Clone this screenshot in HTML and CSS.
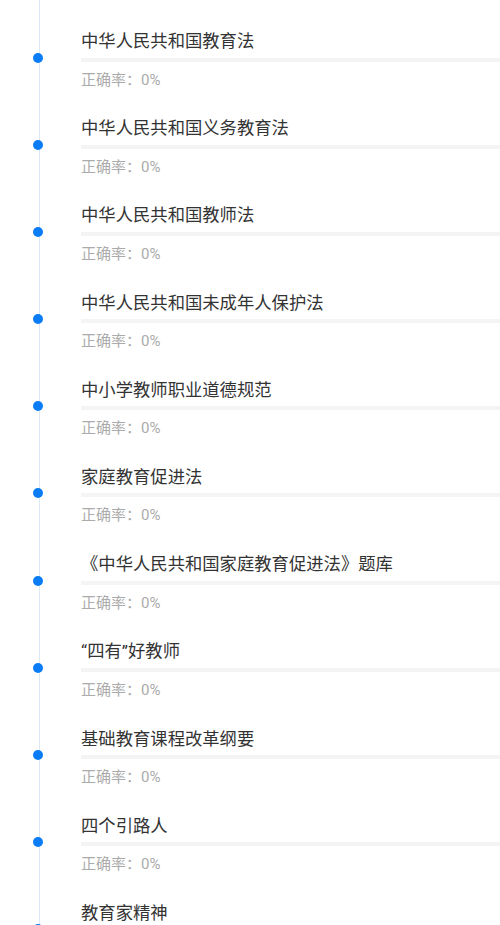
FILE: index.html
```html
<!DOCTYPE html>
<html>
<head>
    <title>题库列表</title>
    <link rel="stylesheet" href="styles.css">
</head>
<body>
    <div class="timeline">
        <div class="item">
            <div class="rail"><span class="dot"></span></div>
            <div class="body">
                <div class="title">中华人民共和国教育法</div>
                <div class="bar"></div>
                <div class="rate">正确率：0%</div>
            </div>
        </div>
        <div class="item">
            <div class="rail"><span class="dot"></span></div>
            <div class="body">
                <div class="title">中华人民共和国义务教育法</div>
                <div class="bar"></div>
                <div class="rate">正确率：0%</div>
            </div>
        </div>
        <div class="item">
            <div class="rail"><span class="dot"></span></div>
            <div class="body">
                <div class="title">中华人民共和国教师法</div>
                <div class="bar"></div>
                <div class="rate">正确率：0%</div>
            </div>
        </div>
        <div class="item">
            <div class="rail"><span class="dot"></span></div>
            <div class="body">
                <div class="title">中华人民共和国未成年人保护法</div>
                <div class="bar"></div>
                <div class="rate">正确率：0%</div>
            </div>
        </div>
        <div class="item">
            <div class="rail"><span class="dot"></span></div>
            <div class="body">
                <div class="title">中小学教师职业道德规范</div>
                <div class="bar"></div>
                <div class="rate">正确率：0%</div>
            </div>
        </div>
        <div class="item">
            <div class="rail"><span class="dot"></span></div>
            <div class="body">
                <div class="title">家庭教育促进法</div>
                <div class="bar"></div>
                <div class="rate">正确率：0%</div>
            </div>
        </div>
        <div class="item">
            <div class="rail"><span class="dot"></span></div>
            <div class="body">
                <div class="title">《中华人民共和国家庭教育促进法》题库</div>
                <div class="bar"></div>
                <div class="rate">正确率：0%</div>
            </div>
        </div>
        <div class="item">
            <div class="rail"><span class="dot"></span></div>
            <div class="body">
                <div class="title">“四有”好教师</div>
                <div class="bar"></div>
                <div class="rate">正确率：0%</div>
            </div>
        </div>
        <div class="item">
            <div class="rail"><span class="dot"></span></div>
            <div class="body">
                <div class="title">基础教育课程改革纲要</div>
                <div class="bar"></div>
                <div class="rate">正确率：0%</div>
            </div>
        </div>
        <div class="item">
            <div class="rail"><span class="dot"></span></div>
            <div class="body">
                <div class="title">四个引路人</div>
                <div class="bar"></div>
                <div class="rate">正确率：0%</div>
            </div>
        </div>
        <div class="item">
            <div class="rail"><span class="dot"></span></div>
            <div class="body">
                <div class="title">教育家精神</div>
                <div class="bar"></div>
                <div class="rate">正确率：0%</div>
            </div>
        </div>
    </div>
</body>
</html>
```

FILE: styles.css
```css
body {
    margin: 0;
    background: #fff;
    font-family: Roboto, "Noto Sans CJK SC", sans-serif;
    overflow: hidden;
}
.timeline {
    padding-top: 13px;
    background: linear-gradient(#dce8f6, #dce8f6) no-repeat 39px 0 / 1px 100%;
}
.item {
    display: flex;
    height: 87.2px;
}
.rail {
    width: 78px;
    flex: none;
}
.dot {
    display: block;
    width: 10px;
    height: 10px;
    margin: 39.5px 0 0 33px;
    border-radius: 50%;
    background: #0a7cf6;
}
.body {
    flex: 1;
    margin-left: 3px;
    padding-top: 15px;
}
.title {
    font-size: 17.33px;
    line-height: 26px;
    color: #333;
    white-space: nowrap;
}
.bar {
    height: 4px;
    margin-top: 3.5px;
    background: #f4f4f4;
}
.rate {
    margin-top: 7px;
    font-size: 15px;
    line-height: 22px;
    color: #ababab;
}
```
